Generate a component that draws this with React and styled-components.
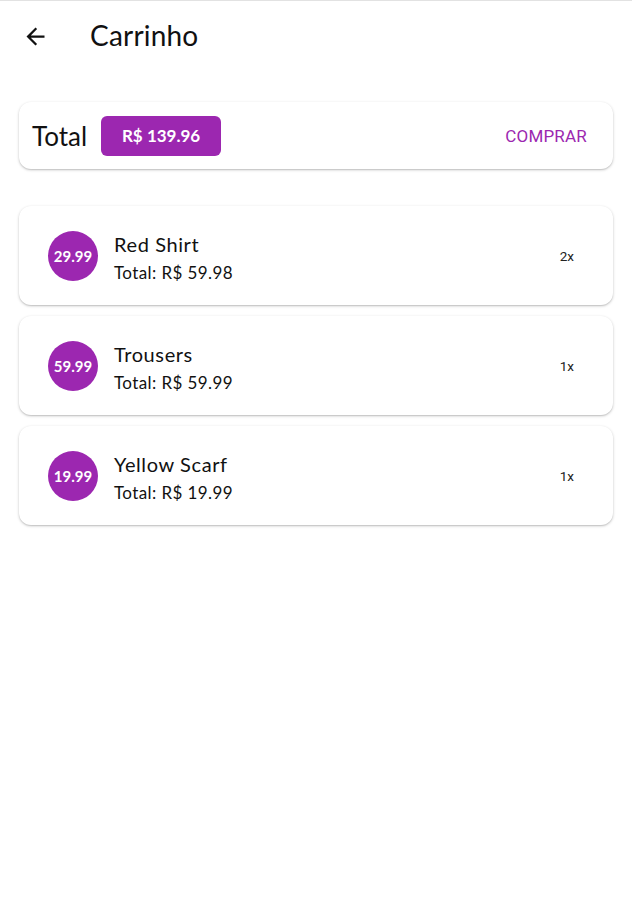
import styled, { createGlobalStyle } from "styled-components";

const GlobalStyle = createGlobalStyle`
  body {
    margin: 0;
    background: #fff;
    font-family: "Lato", "Noto Sans", sans-serif;
  }
`;

const purple = "#9c27b0";

const Page = styled.div`
  border-top: 1px solid #e2e2e2;
  min-height: 896px;
`;

const AppBar = styled.div`
  display: flex;
  align-items: center;
  height: 70px;
  padding-left: 21px;
`;

const BackButton = styled.button`
  display: flex;
  align-items: center;
  justify-content: center;
  width: 28px;
  height: 28px;
  padding: 0;
  border: none;
  background: none;
  margin-right: 41px;
  color: #111;
`;

const Title = styled.h1`
  margin: 0 0 2px;
  font-size: 28px;
  font-weight: 400;
  color: #111;
  letter-spacing: 0.2px;
`;

const Content = styled.div`
  padding: 0 19px;
`;

const Card = styled.div`
  background: #fff;
  border-radius: 12px;
  box-shadow: 0 1px 3px rgba(0, 0, 0, 0.22), 0 1px 1px rgba(0, 0, 0, 0.08);
`;

const TotalCard = styled(Card)`
  display: flex;
  align-items: center;
  height: 67px;
  margin-top: 31px;
  padding: 0 13px;
`;

const TotalLabel = styled.span`
  font-size: 26px;
  color: #111;
  margin-right: 14px;
`;

const Chip = styled.span`
  display: flex;
  align-items: center;
  justify-content: center;
  width: 120px;
  height: 40px;
  border-radius: 6px;
  background: ${purple};
  color: #fff;
  font-size: 17px;
  font-weight: 700;
`;

const BuyButton = styled.button`
  margin-left: auto;
  margin-right: 13px;
  border: none;
  background: none;
  padding: 0;
  font-family: "Roboto", sans-serif;
  font-size: 17px;
  color: ${purple};
  letter-spacing: 0.2px;
`;

const List = styled.div`
  display: flex;
  flex-direction: column;
  gap: 11px;
  margin-top: 37px;
`;

const ItemCard = styled(Card)`
  display: flex;
  align-items: center;
  height: 99px;
  padding: 0 39px 0 29px;
`;

const Avatar = styled.div`
  display: flex;
  align-items: center;
  justify-content: center;
  width: 50px;
  height: 50px;
  border-radius: 50%;
  background: ${purple};
  color: #fff;
  font-size: 15px;
  font-weight: 700;
  flex-shrink: 0;
  margin-right: 16px;
`;

const Info = styled.div`
  display: flex;
  flex-direction: column;
  gap: 6px;
  flex: 1;
  padding-top: 3px;
`;

const ItemName = styled.span`
  font-size: 20px;
  color: #111;
  letter-spacing: 0.6px;
`;

const ItemTotal = styled.span`
  font-size: 17px;
  color: #111;
  letter-spacing: 0.4px;
`;

const Qty = styled.span`
  font-family: "Roboto", sans-serif;
  font-size: 13.5px;
  color: #222;
`;

const items = [
  { name: "Red Shirt", price: 29.99, qty: 2 },
  { name: "Trousers", price: 59.99, qty: 1 },
  { name: "Yellow Scarf", price: 19.99, qty: 1 },
];

const App = () => {
  const total = items.reduce((s, i) => s + i.price * i.qty, 0);
  return (
    <Page>
      <GlobalStyle />
      <AppBar>
        <BackButton>
          <svg width="27" height="27" viewBox="0 0 24 24" fill="currentColor">
            <path d="M20 11H7.83l5.59-5.59L12 4l-8 8 8 8 1.41-1.41L7.83 13H20v-2z" />
          </svg>
        </BackButton>
        <Title>Carrinho</Title>
      </AppBar>
      <Content>
        <TotalCard>
          <TotalLabel>Total</TotalLabel>
          <Chip>R$ {total.toFixed(2)}</Chip>
          <BuyButton>COMPRAR</BuyButton>
        </TotalCard>
        <List>
          {items.map((item) => (
            <ItemCard key={item.name}>
              <Avatar>{item.price.toFixed(2)}</Avatar>
              <Info>
                <ItemName>{item.name}</ItemName>
                <ItemTotal>Total: R$ {(item.price * item.qty).toFixed(2)}</ItemTotal>
              </Info>
              <Qty>{item.qty}x</Qty>
            </ItemCard>
          ))}
        </List>
      </Content>
    </Page>
  );
};

export default App;
